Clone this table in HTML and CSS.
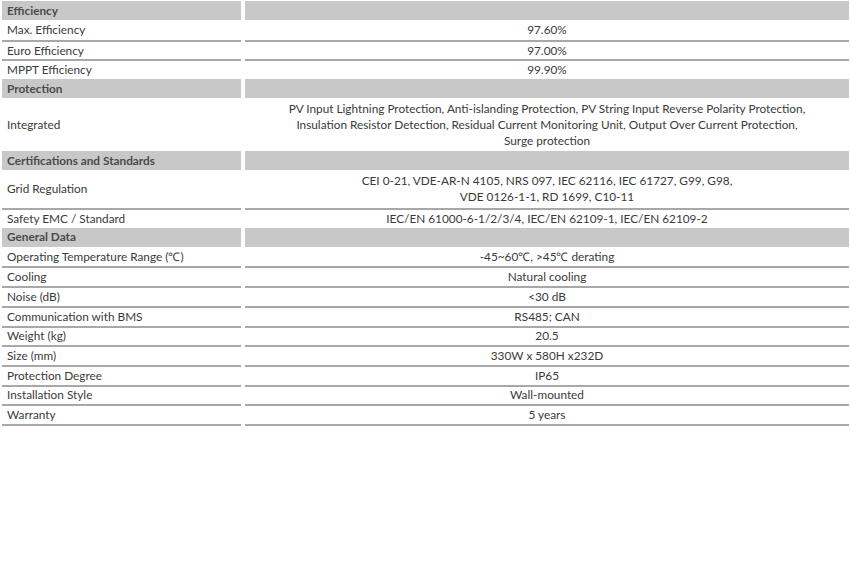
FILE: index.html
```html
<!DOCTYPE html>
<html>
<head>
<meta charset="utf-8">
<link rel="stylesheet" href="styles.css">
</head>
<body>
<div class="spec">
  <div class="row head"><div class="cell label">Efficiency</div><div class="cell value"></div></div>
  <div class="row"><div class="cell label">Max. Efficiency</div><div class="cell value">97.60%</div></div>
  <div class="row"><div class="cell label">Euro Efficiency</div><div class="cell value">97.00%</div></div>
  <div class="row"><div class="cell label">MPPT Efficiency</div><div class="cell value">99.90%</div></div>
  <div class="row head"><div class="cell label">Protection</div><div class="cell value"></div></div>
  <div class="row tall3"><div class="cell label">Integrated</div><div class="cell value">PV Input Lightning Protection, Anti-islanding Protection, PV String Input Reverse Polarity Protection,<br>Insulation Resistor Detection, Residual Current Monitoring Unit, Output Over Current Protection,<br>Surge protection</div></div>
  <div class="row head"><div class="cell label">Certifications and Standards</div><div class="cell value"></div></div>
  <div class="row tall2"><div class="cell label">Grid Regulation</div><div class="cell value">CEI 0-21, VDE-AR-N 4105, NRS 097, IEC 62116, IEC 61727, G99, G98,<br>VDE 0126-1-1, RD 1699, C10-11</div></div>
  <div class="row"><div class="cell label">Safety EMC / Standard</div><div class="cell value">IEC/EN 61000-6-1/2/3/4, IEC/EN 62109-1, IEC/EN 62109-2</div></div>
  <div class="row head"><div class="cell label">General Data</div><div class="cell value"></div></div>
  <div class="row"><div class="cell label">Operating Temperature Range (℃)</div><div class="cell value">-45~60℃, &gt;45℃ derating</div></div>
  <div class="row"><div class="cell label">Cooling</div><div class="cell value">Natural cooling</div></div>
  <div class="row"><div class="cell label">Noise (dB)</div><div class="cell value">&lt;30 dB</div></div>
  <div class="row"><div class="cell label">Communication with BMS</div><div class="cell value">RS485; CAN</div></div>
  <div class="row"><div class="cell label">Weight (kg)</div><div class="cell value">20.5</div></div>
  <div class="row"><div class="cell label">Size (mm)</div><div class="cell value">330W x 580H x232D</div></div>
  <div class="row"><div class="cell label">Protection Degree</div><div class="cell value">IP65</div></div>
  <div class="row"><div class="cell label">Installation Style</div><div class="cell value">Wall-mounted</div></div>
  <div class="row last"><div class="cell label">Warranty</div><div class="cell value">5 years</div></div>
</div>
</body>
</html>
```
FILE: styles.css
```css
html, body {
  margin: 0;
  padding: 0;
  background: #ffffff;
}
.spec {
  padding: 1px 0 0 2px;
  font-family: Lato, "Open Sans", sans-serif;
  font-size: 11.8px;
  color: #3a3a3a;
}
.row {
  display: grid;
  grid-template-columns: 239px 604px;
  column-gap: 4px;
  height: 19.7px;
}
.cell {
  box-sizing: border-box;
  display: flex;
  align-items: center;
  line-height: 16px;
}
.label {
  padding-left: 5px;
}
.value {
  justify-content: center;
  text-align: center;
}
.head {
  height: 19px;
}
.head .cell {
  background: #c8c8c8;
  font-weight: bold;
  color: #4a4a4a;
}
.row:not(.head) + .row:not(.head) .cell {
  border-top: 2px solid #a8a8a8;
}
.last {
  height: 21.7px;
}
.last .cell {
  border-bottom: 2px solid #a8a8a8;
}
.tall3 {
  height: 53px;
}
.tall2 {
  height: 38px;
}
```
